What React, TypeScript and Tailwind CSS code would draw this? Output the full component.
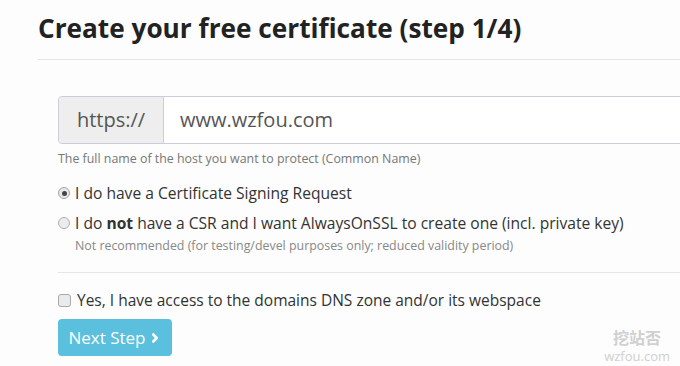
import { ChevronRight } from "lucide-react";

export default function App() {
  return (
    <div className="relative h-[366px] w-[680px] overflow-hidden bg-[#fcfdfc] font-['Open_Sans',sans-serif] text-[#333]">
      <div className="pl-[38px] pt-[11px]">
        <h1 className="text-[26.2px] font-bold leading-[34px] text-[#222]">
          Create your free certificate (step 1/4)
        </h1>
        <div className="mt-[14px] h-px bg-[#e6e6e6]" />

        <div className="pl-[20px] pt-[36px]">
          {/* Common name */}
          <div className="flex h-[48px] w-[700px] rounded-[4px] border border-[#ccd] text-[20px] text-[#555]">
            <div className="flex w-[105px] items-center justify-center rounded-l-[4px] border-r border-[#ccd] bg-[#eeeeee]">
              https://
            </div>
            <div className="flex flex-1 items-center bg-white pl-[16px]">www.wzfou.com</div>
          </div>
          <p className="mt-[6px] text-[12.4px] leading-[17px] text-[#777]">
            The full name of the host you want to protect (Common Name)
          </p>

          {/* CSR choice */}
          <div className="mt-[15px] flex flex-col gap-[8px] text-[15.6px] leading-[22px]">
            <label className="flex items-center gap-[5px]">
              <span className="flex h-[12px] w-[12px] items-center justify-center rounded-full border border-[#a5a5a5] bg-[#e8e8e8]">
                <span className="h-[5px] w-[5px] rounded-full bg-[#444]" />
              </span>
              I do have a Certificate Signing Request
            </label>
            <div>
              <label className="flex items-center gap-[5px]">
                <span className="h-[12px] w-[12px] rounded-full border border-[#b0b0b0] bg-[#ececec]" />
                <span>
                  I do <b>not</b> have a CSR and I want AlwaysOnSSL to create one (incl. private key)
                </span>
              </label>
              <p className="mt-[3px] pl-[17px] text-[12.4px] leading-[18px] text-[#888]">
                Not recommended (for testing/devel purposes only; reduced validity period)
              </p>
            </div>
          </div>

          <div className="mt-[17px] h-px bg-[#e6e6e6]" />

          {/* DNS access */}
          <label className="mt-[16px] flex items-center gap-[6px] text-[15.5px] leading-[22px]">
            <span className="h-[13px] w-[13px] rounded-[3px] border border-[#a9a9a9] bg-[#e9eaee]" />
            Yes, I have access to the domains DNS zone and/or its webspace
          </label>

          <button className="mt-[8px] flex h-[37px] w-[114px] items-center justify-center gap-[2px] rounded-[4px] bg-[#5bc0de] text-[17px] text-white">
            Next Step
            <ChevronRight size={14} strokeWidth={4.5} />
          </button>
        </div>
      </div>

      {/* watermark */}
      <div className="absolute bottom-[2px] right-[10px] flex flex-col items-center text-[#d0d0d0]">
        <span className="font-['Noto_Sans_CJK_SC',sans-serif] text-[16px] font-bold leading-[22px]">挖站否</span>
        <span className="text-[13px] leading-[16px]">wzfou.com</span>
      </div>
    </div>
  );
}
